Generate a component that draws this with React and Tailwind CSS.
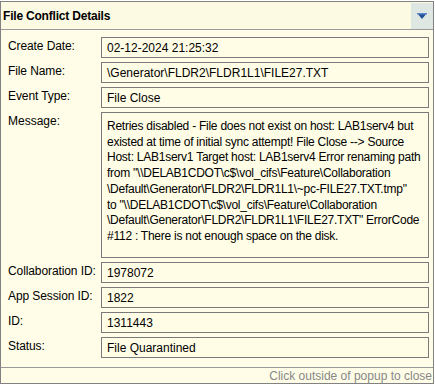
const rows = [
  { label: "Create Date:", value: "02-12-2024 21:25:32" },
  { label: "File Name:", value: "\\Generator\\FLDR2\\FLDR1L1\\FILE27.TXT" },
  { label: "Event Type:", value: "File Close" },
];

const message = [
  "Retries disabled - File does not exist on host: LAB1serv4 but",
  "existed at time of initial sync attempt! File Close --> Source",
  "Host: LAB1serv1 Target host: LAB1serv4 Error renaming path",
  'from "\\\\DELAB1CDOT\\c$\\vol_cifs\\Feature\\Collaboration',
  '\\Default\\Generator\\FLDR2\\FLDR1L1\\~pc-FILE27.TXT.tmp"',
  'to "\\\\DELAB1CDOT\\c$\\vol_cifs\\Feature\\Collaboration',
  '\\Default\\Generator\\FLDR2\\FLDR1L1\\FILE27.TXT" ErrorCode',
  "#112 : There is not enough space on the disk.",
];

const tail = [
  { label: "Collaboration ID:", value: "1978072" },
  { label: "App Session ID:", value: "1822" },
  { label: "ID:", value: "1311443" },
  { label: "Status:", value: "File Quarantined" },
];

function Row({ label, value }) {
  return (
    <div className="flex">
      <div className="w-[100px] pl-[7px] pt-[1px] shrink-0 tracking-[-0.1px]">{label}</div>
      <div className="w-[328px] h-[21px] border border-[#7a7a7a] bg-[#fffde6] px-[5px] pt-[2px] leading-[16px] whitespace-nowrap">
        {value}
      </div>
    </div>
  );
}

export default function App() {
  return (
    <div
      className="w-[435px] h-[384px] bg-white pt-[1px] text-[12px] text-black"
      style={{ fontFamily: "'Liberation Sans', Arial, sans-serif" }}
    >
      <div className="w-[434px] h-[383px] border border-[#828282] bg-[#fffde8] flex flex-col">
        <div className="h-[28px] bg-[#fcfae2] border-b border-[#9a9a9a] flex items-center justify-between pl-[2px] pr-0">
          <span className="font-bold text-[12px] tracking-[-0.2px]">File Conflict Details</span>
          <div className="w-[22px] h-[26px] bg-[#dfe7e2] flex items-center justify-center">
            <svg width="10" height="6" viewBox="0 0 10 6">
              <polygon points="0,0 10,0 5,6" fill="#1f4f96" />
              <rect x="0" y="0" width="10" height="1.5" fill="#5d86c8" />
            </svg>
          </div>
        </div>
        <div className="flex flex-col gap-[4px] pt-[7px] leading-[16px]">
          {rows.map((r) => (
            <Row key={r.label} {...r} />
          ))}
          <div className="flex">
            <div className="w-[100px] pl-[7px] pt-[1px] shrink-0">Message:</div>
            <div className="w-[328px] h-[146px] border border-[#7a7a7a] bg-[#fffde6] px-[5px] pt-[6px] leading-[15.7px] tracking-[-0.25px]">
              {message.map((l, i) => (
                <div key={i} className="whitespace-nowrap">
                  {l}
                </div>
              ))}
            </div>
          </div>
          {tail.map((r) => (
            <Row key={r.label} {...r} />
          ))}
        </div>
        <div className="mt-auto h-[16px] border-t border-[#9a9a9a] flex items-center justify-end text-[#878787] pr-[1px]">
          Click outside of popup to close
        </div>
      </div>
    </div>
  );
}
